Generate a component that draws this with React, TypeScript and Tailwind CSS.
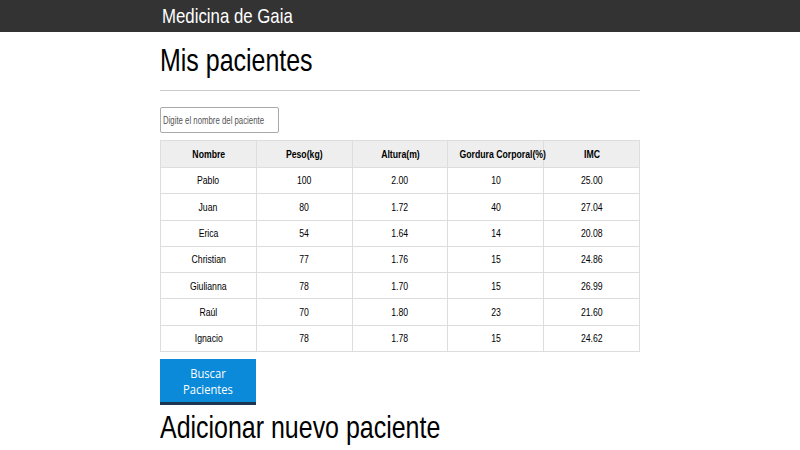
import React from "react";

const pacientes = [
  { nombre: "Pablo", peso: "100", altura: "2.00", gordura: "10", imc: "25.00" },
  { nombre: "Juan", peso: "80", altura: "1.72", gordura: "40", imc: "27.04" },
  { nombre: "Erica", peso: "54", altura: "1.64", gordura: "14", imc: "20.08" },
  { nombre: "Christian", peso: "77", altura: "1.76", gordura: "15", imc: "24.86" },
  { nombre: "Giulianna", peso: "78", altura: "1.70", gordura: "15", imc: "26.99" },
  { nombre: "Raúl", peso: "70", altura: "1.80", gordura: "23", imc: "21.60" },
  { nombre: "Ignacio", peso: "78", altura: "1.78", gordura: "15", imc: "24.62" },
];

const headers = ["Nombre", "Peso(kg)", "Altura(m)", "Gordura Corporal(%)", "IMC"];

// the page's font is a narrow Arial; squeeze Liberation Sans to match
function Narrow({ children }: { children: React.ReactNode }) {
  return <span className="inline-block whitespace-nowrap scale-x-[0.79]">{children}</span>;
}

export default function App() {
  return (
    <div
      className="w-[800px] h-[450px] overflow-hidden bg-white text-black"
      style={{ fontFamily: '"Liberation Sans", Arial, sans-serif' }}
    >
      {/* Header */}
      <header className="h-8 bg-[#333333]">
        <div className="w-[480px] mx-auto pl-[2px] text-[21px] leading-8 text-white">
          <span className="inline-block origin-left whitespace-nowrap scale-x-[0.8]">Medicina de Gaia</span>
        </div>
      </header>

      <main className="w-[480px] mx-auto">
        <h1 className="text-[32px] leading-[38px] mt-[9px]">
          <span className="inline-block origin-left whitespace-nowrap scale-x-[0.78]">Mis pacientes</span>
        </h1>
        <hr className="mt-[11px] border-[#cccccc]" />

        <div className="mt-4 w-[119px] h-[26px] px-[2px] border border-[#aaaaaa] rounded-[2px] flex items-center overflow-hidden">
          <span className="inline-block origin-left whitespace-nowrap scale-x-[0.78] text-[10px] text-[#555555]">
            Digite el nombre del paciente
          </span>
        </div>

        {/* Table */}
        <table className="mt-[7px] w-full table-fixed border-collapse text-[11px]">
          <thead>
            <tr className="h-[27px] bg-[#eeeeee]">
              {headers.map((h) => (
                <th key={h} className="border border-[#dddddd] font-bold">
                  <Narrow>{h}</Narrow>
                </th>
              ))}
            </tr>
          </thead>
          <tbody>
            {pacientes.map((p) => (
              <tr key={p.nombre} className="h-[26.3px]">
                {[p.nombre, p.peso, p.altura, p.gordura, p.imc].map((v, i) => (
                  <td key={i} className="border border-[#dddddd] text-center">
                    <Narrow>{v}</Narrow>
                  </td>
                ))}
              </tr>
            ))}
          </tbody>
        </table>

        <button
          className="mt-[7px] w-24 h-[46px] bg-[#0a8ad8] border-b-[3px] border-[#1c3550] text-white text-[13px] leading-[16px] text-center"
          style={{ fontFamily: '"Open Sans", sans-serif' }}
        >
          <span className="inline-block scale-x-[0.86]">
            Buscar
            <br />
            Pacientes
          </span>
        </button>

        <h2 className="text-[32px] leading-[38px] mt-[3px]">
          <span className="inline-block origin-left whitespace-nowrap scale-x-[0.78]">Adicionar nuevo paciente</span>
        </h2>
      </main>
    </div>
  );
}
